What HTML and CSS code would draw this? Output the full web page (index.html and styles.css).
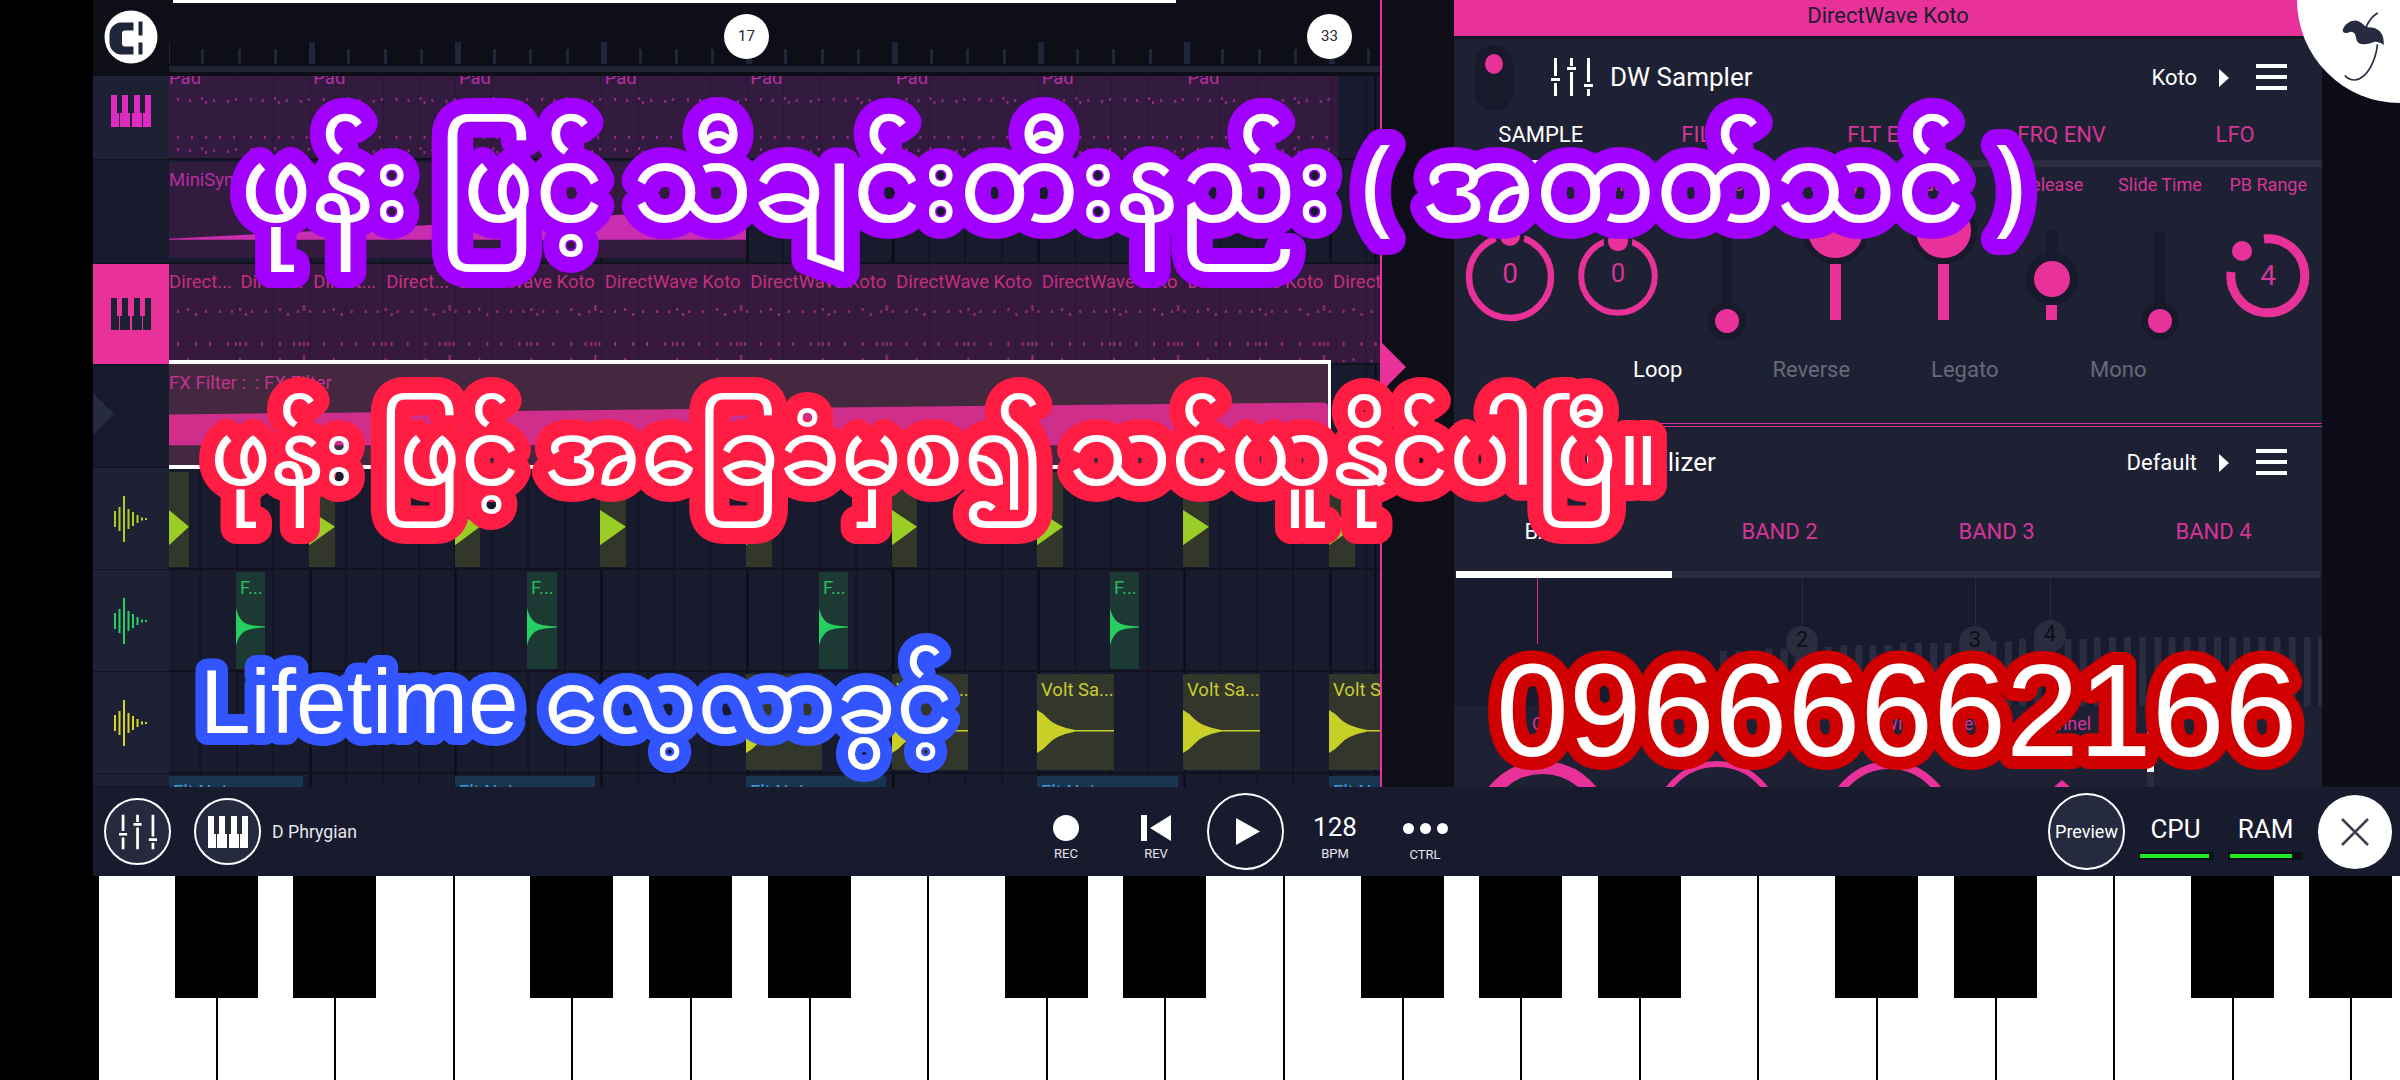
FILE: index.html
```html
<!DOCTYPE html>
<html lang="my">
<head>
<meta charset="UTF-8">
<title>FL Studio Mobile</title>
<link rel="stylesheet" href="styles.css">
</head>
<body>
<svg class="defs" width="0" height="0">
  <defs>
    <pattern id="notes-pad" width="72.85" height="50" patternUnits="userSpaceOnUse">
      <path class="note-mark note-mark--pad" d="M8 4h2v3H8zM20 5h2v3h-2zM32 3h2v3h-2zM36 7h2v3h-2zM44 5h2v3h-2zM58 6h2v3h-2zM66 4h2v3h-2zM8 42h2v3H8zM22 42h2v3h-2zM36 42h2v3h-2zM50 42h2v3h-2zM64 42h2v3h-2z"/>
    </pattern>
    <pattern id="notes-koto" width="145.7" height="50" patternUnits="userSpaceOnUse">
      <path class="note-mark note-mark--koto" d="M8 8h2v3H8zM18 6h2v3h-2zM26 11h2v3h-2zM36 8h2v3h-2zM50 8h2v3h-2zM62 8h2v3h-2zM70 6h2v3h-2zM76 11h2v3h-2zM82 8h2v3h-2zM96 8h2v3h-2zM110 6h2v3h-2zM118 11h2v3h-2zM128 8h2v3h-2zM134 3h2v6h-2zM140 8h2v3h-2zM8 40h2v4H8zM26 40h2v4h-2zM40 40h2v4h-2zM58 40h2v4h-2zM66 40h2v4h-2zM70 40h2v4h-2zM76 40h2v4h-2zM92 40h2v4h-2zM110 40h2v4h-2zM124 40h2v4h-2zM130 40h2v4h-2zM134 40h2v4h-2zM138 40h2v4h-2z"/>
    </pattern>
    <symbol id="piano" viewBox="0 0 40 32">
      <path fill-rule="evenodd" d="M0 0h40v32H0zM6 0v18h2v14h1V18h2V0zM17 0v18h2v14h2V18h2V0zM29 0v18h2v14h1V18h2V0z"/>
    </symbol>
    <symbol id="wave" viewBox="0 0 34 46">
      <path d="M1 15h2v16H1zM5.500 11h2v24h-2zM10 0h2v46h-2zM14.500 13h2v20h-2zM19 16h2v14h-2zM23.500 19h2v8h-2zM28 21.500h2v3h-2zM32 22h2v2h-2z"/>
    </symbol>
    <symbol id="mixer" viewBox="0 0 42 38">
      <path d="M3 0h3v18H3zM0 20h9v3H0zM3 25h3v13H3zM19 0h3v8h-3zM16 9h9v3h-9zM19 14h3v24h-3zM36 0h3v24h-3zM33 26h9v3h-9zM36 31h3v7h-3z"/>
    </symbol>
    <symbol id="decay-short" viewBox="0 0 30 40" preserveAspectRatio="none">
      <path d="M0 0Q2 10 8 15Q14 19 30 19.500V20.500Q14 21 8 25Q2 30 0 40z"/>
    </symbol>
    <symbol id="decay-long" viewBox="0 0 76 44" preserveAspectRatio="none">
      <path d="M0 0Q6 3 11 9Q18 17 38 20.500H76V22H38Q18 26 11 35Q6 41 0 44z"/>
    </symbol>
    <symbol id="hit-shape" viewBox="0 0 20 40" preserveAspectRatio="none">
      <path d="M0 0L20 18L0 38z"/>
    </symbol>
  </defs>
</svg>

<div class="app">
  <div class="workspace">
    <section class="timeline">
      <div class="corner">
        <svg class="logo" viewBox="0 0 54 54">
          <circle cx="27" cy="27" r="26.500" fill="#fff"/>
          <path fill="#20263a" d="M29.500 12.500H17A12 12 0 0 0 5.500 24.500V32.500A12 12 0 0 0 17 44.500H29.500V36.500H21A3 3 0 0 1 18 33.500V23.500A3 3 0 0 1 21 20.500H29.500z"/>
          <path fill="#20263a" d="M34.500 11.500h4v14h-4zM34.500 32.500h4v12h-4z"/>
        </svg>
      </div>
      <div class="ruler">
        <span class="bar-mark">17</span>
        <span class="bar-mark">33</span>
      </div>

      <div class="track-head track-head--one"><svg class="piano-icon piano-icon--pink"><use href="#piano"/></svg></div>
      <div class="lane lane--one">
        <div class="clip clip--pad" style="left:0;width:1169px">
          <svg class="notes notes--pad"><rect width="100%" height="100%" fill="url(#notes-pad)"/></svg>
          <span class="cell cell--first">Pad</span><span class="cell">Pad</span><span class="cell">Pad</span><span class="cell">Pad</span><span class="cell">Pad</span><span class="cell">Pad</span><span class="cell">Pad</span><span class="cell">Pad</span>
        </div>
      </div>

      <div class="track-head track-head--two"></div>
      <div class="lane lane--two">
        <div class="clip clip--synth" style="left:0;width:577px">
          <span class="clip-name">MiniSynth : MiniSynth</span>
          <svg class="envelope" viewBox="0 0 577 100" preserveAspectRatio="none"><path d="M0 80L577 48V81H0z"/></svg>
        </div>
      </div>

      <div class="track-head track-head--active"><svg class="piano-icon piano-icon--dark"><use href="#piano"/></svg></div>
      <div class="lane lane--three">
        <div class="clip clip--koto" style="left:0;width:1211px">
          <svg class="notes notes--koto"><rect width="100%" height="100%" fill="url(#notes-koto)"/></svg>
          <span class="cell cell--half-first">Direct...</span><span class="cell cell--half">Direct...</span><span class="cell cell--half">Direct...</span><span class="cell cell--half">Direct...</span><span class="cell">DirectWave Koto</span><span class="cell">DirectWave Koto</span><span class="cell">DirectWave Koto</span><span class="cell">DirectWave Koto</span><span class="cell">DirectWave Koto</span><span class="cell">DirectWave Koto</span><span class="cell">DirectWave Koto</span><span class="cell">Direct</span>
        </div>
      </div>

      <div class="track-head track-head--fx"><span class="fold-arrow"></span></div>
      <div class="lane lane--four">
        <div class="clip clip--fx" style="left:0;width:1162px">
          <svg class="envelope envelope--fx" viewBox="0 0 1156 100" preserveAspectRatio="none"><path d="M0 50L1150 38Q1156 38 1156 42V80.500H0z"/></svg>
          <span class="clip-name">FX Filter :&nbsp; : FX Filter</span>
        </div>
      </div>

      <div class="track-head"><svg class="wave-icon wave-icon--lime"><use href="#wave"/></svg></div>
      <div class="lane lane--lime">
        <div class="clip clip--lime" style="left:0;width:20px"><svg class="hit"><use href="#hit-shape"/></svg></div>
        <div class="clip clip--lime" style="left:140px;width:26px"><svg class="hit"><use href="#hit-shape"/></svg></div>
        <div class="clip clip--lime" style="left:286px;width:25px"><svg class="hit"><use href="#hit-shape"/></svg></div>
        <div class="clip clip--lime" style="left:431px;width:26px"><svg class="hit"><use href="#hit-shape"/></svg></div>
        <div class="clip clip--lime" style="left:577px;width:26px"><svg class="hit"><use href="#hit-shape"/></svg></div>
        <div class="clip clip--lime" style="left:723px;width:25px"><svg class="hit"><use href="#hit-shape"/></svg></div>
        <div class="clip clip--lime" style="left:868px;width:26px"><svg class="hit"><use href="#hit-shape"/></svg></div>
        <div class="clip clip--lime" style="left:1014px;width:26px"><svg class="hit"><use href="#hit-shape"/></svg></div>
        <div class="clip clip--lime" style="left:1160px;width:26px"><svg class="hit"><use href="#hit-shape"/></svg></div>
      </div>

      <div class="track-head"><svg class="wave-icon wave-icon--green"><use href="#wave"/></svg></div>
      <div class="lane lane--green">
        <div class="clip clip--green" style="left:67px;width:29px"><span class="clip-name">F...</span><svg class="decay"><use href="#decay-short"/></svg></div>
        <div class="clip clip--green" style="left:358px;width:30px"><span class="clip-name">F...</span><svg class="decay"><use href="#decay-short"/></svg></div>
        <div class="clip clip--green" style="left:650px;width:29px"><span class="clip-name">F...</span><svg class="decay"><use href="#decay-short"/></svg></div>
        <div class="clip clip--green" style="left:941px;width:29px"><span class="clip-name">F...</span><svg class="decay"><use href="#decay-short"/></svg></div>
      </div>

      <div class="track-head"><svg class="wave-icon wave-icon--yellow"><use href="#wave"/></svg></div>
      <div class="lane lane--yellow">
        <div class="clip clip--yellow" style="left:577px;width:76px"><span class="clip-name">Volt Sa...</span><svg class="decay decay--long"><use href="#decay-long"/></svg></div>
        <div class="clip clip--yellow" style="left:723px;width:76px"><span class="clip-name">Volt Sa...</span><svg class="decay decay--long"><use href="#decay-long"/></svg></div>
        <div class="clip clip--yellow" style="left:868px;width:77px"><span class="clip-name">Volt Sa...</span><svg class="decay decay--long"><use href="#decay-long"/></svg></div>
        <div class="clip clip--yellow" style="left:1014px;width:77px"><span class="clip-name">Volt Sa...</span><svg class="decay decay--long"><use href="#decay-long"/></svg></div>
        <div class="clip clip--yellow" style="left:1160px;width:77px"><span class="clip-name">Volt Sa...</span><svg class="decay decay--long"><use href="#decay-long"/></svg></div>
      </div>

      <div class="track-head"></div>
      <div class="lane lane--blue">
        <div class="clip clip--blue" style="left:0;width:134px"><span class="clip-name">Flt Noise</span></div>
        <div class="clip clip--blue" style="left:286px;width:140px"><span class="clip-name">Flt Noise</span></div>
        <div class="clip clip--blue" style="left:577px;width:140px"><span class="clip-name">Flt Noise</span></div>
        <div class="clip clip--blue" style="left:868px;width:141px"><span class="clip-name">Flt Noise</span></div>
        <div class="clip clip--blue" style="left:1160px;width:60px"><span class="clip-name">Flt Noise</span></div>
      </div>
    </section>

    <div class="gutter"><span class="playhead"></span></div>

    <section class="panel">
      <div class="plugin-title">DirectWave Koto</div>
      <div class="plugin">
        <header class="plugin-head">
          <span class="power"><span class="power-dot"></span></span>
          <svg class="mixer-icon"><use href="#mixer"/></svg>
          <span class="plugin-name">DW Sampler</span>
          <span class="preset">Koto</span>
          <span class="arrow"></span>
          <span class="burger"><i></i><i></i><i></i></span>
        </header>
        <nav class="tabs tabs--five">
          <span class="tab tab--on">SAMPLE</span>
          <span class="tab">FILTER</span>
          <span class="tab">FLT ENV</span>
          <span class="tab">FRQ ENV</span>
          <span class="tab">LFO</span>
        </nav>
        <div class="rail"><span class="rail-on rail-on--five"></span></div>
        <div class="params">
          <div class="param"><span class="param-name">Start</span>
            <svg class="knob" viewBox="0 0 100 100"><circle class="knob-ring" cx="50" cy="50" r="41"/><circle class="knob-dot" cx="50" cy="9" r="10"/><text x="50" y="56">0</text></svg></div>
          <div class="param"><span class="param-name">End</span>
            <svg class="knob knob--small" viewBox="0 0 100 100"><circle class="knob-ring" cx="50" cy="50" r="40"/><circle class="knob-dot" cx="50" cy="12" r="11"/><text x="50" y="57">0</text></svg></div>
          <div class="param"><span class="param-name">Attack</span><span class="fader"><span class="fader-thumb fader-thumb--low"></span></span></div>
          <div class="param"><span class="param-name">Decay</span><span class="fader"><span class="fader-fill" style="height:56px"></span><span class="fader-thumb fader-thumb--big" style="bottom:56px"></span></span></div>
          <div class="param"><span class="param-name">Sustain</span><span class="fader"><span class="fader-fill" style="height:56px"></span><span class="fader-thumb fader-thumb--big" style="bottom:56px"></span></span></div>
          <div class="param"><span class="param-name">Release</span><span class="fader"><span class="fader-fill" style="height:15px"></span><span class="fader-thumb" style="bottom:15px"></span></span></div>
          <div class="param"><span class="param-name">Slide Time</span><span class="fader"><span class="fader-thumb fader-thumb--low"></span></span></div>
          <div class="param"><span class="param-name">PB Range</span>
            <svg class="knob knob--range" viewBox="0 0 100 100"><path class="range-arc" d="M46 13A37 37 0 1 1 13 46"/><circle class="knob-dot knob-dot--range" cx="24" cy="25" r="10"/><text x="50" y="59">4</text></svg></div>
        </div>
        <div class="toggles">
          <span class="toggle toggle--on">Loop</span>
          <span class="toggle">Reverse</span>
          <span class="toggle">Legato</span>
          <span class="toggle">Mono</span>
        </div>
      </div>

      <div class="divider"></div>

      <div class="plugin plugin--eq">
        <header class="plugin-head plugin-head--eq">
          <svg class="mixer-icon"><use href="#mixer"/></svg>
          <span class="plugin-name">Equalizer</span>
          <span class="preset">Default</span>
          <span class="arrow"></span>
          <span class="burger"><i></i><i></i><i></i></span>
        </header>
        <nav class="tabs tabs--four">
          <span class="tab tab--on">BAND 1</span>
          <span class="tab">BAND 2</span>
          <span class="tab">BAND 3</span>
          <span class="tab">BAND 4</span>
        </nav>
        <div class="rail rail--eq"><span class="rail-on rail-on--four"></span></div>
        <div class="eq-graph">
          <div class="spectrum">
            <svg class="spectrum-bars" viewBox="0 0 600 70" preserveAspectRatio="none"><path d="M0 14h7v56H0zM15 14h7v56h-7zM30 14h7v56h-7zM45 12h7v58h-7zM60 12h7v58h-7zM74 10h7v60h-7zM89 10h7v60h-7zM104 10h7v60h-7zM119 8h7v62h-7zM134 8h7v62h-7zM148 8h7v62h-7zM163 8h7v62h-7zM178 6h7v64h-7zM193 6h7v64h-7zM208 6h7v64h-7zM222 6h7v64h-7zM237 4h7v66h-7zM252 4h7v66h-7zM267 4h7v66h-7zM282 4h7v66h-7zM296 2h7v68h-7zM311 2h7v68h-7zM326 2h7v68h-7zM341 2h7v68h-7zM356 2h7v68h-7zM370 0h7v70h-7zM385 0h7v70h-7zM400 0h7v70h-7zM415 0h7v70h-7zM430 0h7v70h-7zM444 0h7v70h-7zM459 0h7v70h-7zM474 0h7v70h-7zM489 0h7v70h-7zM504 0h7v70h-7zM518 0h7v70h-7zM533 0h7v70h-7zM548 0h7v70h-7zM563 0h7v70h-7zM578 0h7v70h-7zM592 0h7v70h-7z"/></svg>
          </div>
          <span class="band band--one"></span>
          <span class="band band--two"><b>2</b></span>
          <span class="band band--three"><b>3</b></span>
          <span class="band band--four"><b>4</b></span>
        </div>
        <div class="eq-controls">
          <span class="eq-name eq-name--q">Q</span>
          <span class="eq-name eq-name--freq">Freq</span>
          <span class="eq-name eq-name--width">Width</span>
          <span class="eq-name eq-name--gain">Level</span>
          <span class="eq-name eq-name--chan">Channel</span>
          <span class="eq-arc eq-arc--one"></span>
          <span class="eq-arc eq-arc--two"></span>
          <span class="eq-arc eq-arc--three"></span>
          <span class="eq-mark"></span>
          <span class="eq-level"></span>
        </div>
      </div>
    </section>

    <aside class="side">
      <span class="fruit-badge">
        <svg class="fruit" viewBox="0 0 240 300">
          <path class="fruit-body" d="M68 90C75 70 95 60 110 62C125 64 130 78 145 82C165 82 185 90 190 115L192 135C185 130 175 125 165 125C150 130 125 140 112 125C105 110 110 100 95 95C85 95 80 103 70 97z"/>
          <path class="fruit-stem" d="M172 40C155 50 145 65 138 82M172 135C168 175 145 235 105 240C95 240 82 235 76 228"/>
        </svg>
      </span>
    </aside>
  </div>

  <footer class="transport">
    <div class="transport-left">
      <span class="round-btn"><svg class="mixer-icon mixer-icon--small"><use href="#mixer"/></svg></span>
      <span class="round-btn"><svg class="piano-icon piano-icon--white"><use href="#piano"/></svg></span>
      <span class="scale-name">D Phrygian</span>
    </div>
    <div class="transport-mid">
      <div class="ctl ctl--rec"><span class="rec-dot"></span><span class="ctl-label">REC</span></div>
      <div class="ctl ctl--rev"><svg class="rev-icon" viewBox="0 0 30 26"><path d="M0 0h6v26H0zM30 0v26L9 13z"/></svg><span class="ctl-label">REV</span></div>
      <span class="play"><svg class="play-icon" viewBox="0 0 24 28"><path d="M0 0L24 13.500L0 27z"/></svg></span>
      <div class="ctl ctl--bpm"><span class="bpm">128</span><span class="ctl-label">BPM</span></div>
      <div class="ctl ctl--ctrl"><span class="dots"><i></i><i></i><i></i></span><span class="ctl-label">CTRL</span></div>
    </div>
    <div class="transport-right">
      <span class="preview">Preview</span>
      <div class="meter"><span class="meter-name">CPU</span><span class="meter-bar"><i class="meter-fill meter-fill--cpu"></i></span></div>
      <div class="meter"><span class="meter-name">RAM</span><span class="meter-bar"><i class="meter-fill meter-fill--ram"></i></span></div>
      <span class="close"><svg class="close-icon" viewBox="0 0 28 28"><path d="M1 1L27 27M27 1L1 27"/></svg></span>
    </div>
  </footer>

  <div class="keyboard">
    <span class="key"></span><span class="key key--sharp"></span><span class="key key--sharp"></span><span class="key"></span><span class="key key--sharp"></span><span class="key key--sharp"></span><span class="key key--sharp"></span><span class="key"></span><span class="key key--sharp"></span><span class="key key--sharp"></span><span class="key"></span><span class="key key--sharp"></span><span class="key key--sharp"></span><span class="key key--sharp"></span><span class="key"></span><span class="key key--sharp"></span><span class="key key--sharp"></span><span class="key"></span><span class="key key--sharp"></span><span class="key key--sharp"></span>
  </div>
</div>

<svg class="promos" viewBox="0 0 2400 1080">
  <text class="promo promo--burmese promo--title" x="240" y="222">ဖုန်း ဖြင့် သီချင်းတီးနည်း ( အတတ်သင် )</text>
  <text class="promo promo--burmese promo--sub" x="210" y="485">ဖုန်း ဖြင့် အခြေခံမှစ၍ သင်ယူနိုင်ပါပြီ။</text>
  <text class="promo promo--life" x="200" y="733">Lifetime <tspan class="promo-burmese">လေ့လာခွင့်</tspan></text>
  <text class="promo promo--phone" x="1496" y="756">09666662166</text>
</svg>
</body>
</html>
```

FILE: styles.css
```css
* {
	box-sizing: border-box;
}

html, body {
	margin: 0;
	height: 100%;
	overflow: hidden;
	background: #000;
}

body {
	position: relative;
	font-family: Roboto, "Liberation Sans", sans-serif;
	color: #fff;
}

.defs {
	position: absolute;
}

.app {
	display: flex;
	flex-direction: column;
	height: 1080px;
	padding-left: 93px;
}

.workspace {
	display: flex;
	height: 787px;
	background: #0d0e18;
}

/* timeline */

.timeline {
	display: grid;
	grid-template-columns: 76px 1211px;
	grid-template-rows: 76px 84px 104px 101px 103px 102px 102px 102px 13px;
	width: 1287px;
	background: #0d0e18;
}

.corner {
	display: flex;
	align-items: center;
	padding: 0 0 3px 11px;
	background: #0d0e18;
}

.logo {
	width: 54px;
	height: 54px;
}

.ruler {
	position: relative;
	border-bottom: 6px solid #1f2433;
	margin-bottom: 4px;
	background-color: #0d0e18;
	background-image:
		linear-gradient(#fff, #fff),
		repeating-linear-gradient(90deg, #20263a 0 6px, transparent 6px 145.7px),
		repeating-linear-gradient(90deg, #20263a 0 3px, transparent 3px 36.43px);
	background-size: 1003px 3px, 100% 22px, 100% 15px;
	background-position: 4px 0, -5.400px 42px, -4px 49px;
	background-repeat: no-repeat;
}

.bar-mark {
	position: absolute;
	top: 14px;
	width: 45px;
	height: 45px;
	border-radius: 50%;
	background: #fff;
	color: #20263a;
	font-size: 15px;
	line-height: 45px;
	text-align: center;
}

.bar-mark:nth-child(1) {
	left: 555px;
}

.bar-mark:nth-child(2) {
	left: 1138px;
}

.track-head {
	display: flex;
	align-items: center;
	justify-content: center;
	background: #1e2133;
	border-bottom: 1px solid #10111c;
}

.track-head--one {
	align-items: flex-start;
	padding-top: 19px;
}

.track-head--two,
.track-head--fx {
	background: #171a2c;
}

.track-head--active {
	background: #e8329a;
}

.track-head--fx {
	justify-content: flex-start;
}

.fold-arrow {
	width: 0;
	height: 0;
	margin-top: -5px;
	border-left: 21px solid #262b3e;
	border-top: 21px solid transparent;
	border-bottom: 21px solid transparent;
}

.piano-icon {
	width: 40px;
	height: 32px;
}

.piano-icon--pink {
	fill: #df2cc0;
}

.piano-icon--dark {
	fill: #1e2133;
}

.piano-icon--white {
	fill: #fff;
}

.wave-icon {
	width: 34px;
	height: 46px;
	margin-right: 3px;
}

.wave-icon--lime {
	fill: #a9cf26;
}

.wave-icon--green {
	fill: #27cf62;
}

.wave-icon--yellow {
	fill: #d4d42a;
}

.lane {
	position: relative;
	overflow: hidden;
	background-color: #181a2e;
	background-image:
		repeating-linear-gradient(90deg, #0b0c16 0 2px, transparent 2px 145.7px),
		repeating-linear-gradient(90deg, #0e101b 0 1px, transparent 1px 36.43px);
	background-position: -5.400px 0, -5.400px 0;
	border-bottom: 2px solid #10111c;
}

.clip {
	position: absolute;
	top: 2px;
	bottom: 2px;
	overflow: hidden;
	font-size: 18.500px;
	white-space: nowrap;
}

.clip-name {
	display: block;
	padding-left: 4px;
}

.cell {
	flex: none;
	position: relative;
	width: 145.700px;
	padding-left: 4px;
	overflow: hidden;
}

.cell--first {
	width: 140.300px;
	padding-left: 0;
}

.cell--half {
	width: 72.850px;
}

.cell--half-first {
	width: 67.450px;
	padding-left: 0;
}

.notes {
	position: absolute;
	left: 0;
	width: 100%;
}

.note-mark--pad {
	fill: #8e2a8a;
}

.note-mark--koto {
	fill: #96306c;
}

.clip--pad,
.clip--koto {
	display: flex;
	align-items: flex-start;
	top: 0;
	bottom: 0;
	background-image: repeating-linear-gradient(90deg, #2b1535 0 1px, transparent 1px 36.43px);
	background-position: -5.400px 0;
}

.clip--pad {
	width: 1169px;
	background-color: #331a3f;
	color: #b32fa0;
}

.clip--pad .cell {
	margin-top: -9px;
}

.notes--pad {
	top: 18px;
	height: 60px;
}

.clip--synth {
	top: 2px;
	bottom: 4px;
	background: #331a3f;
	color: #b32fa0;
}

.clip--synth .clip-name {
	padding: 7px 0 0;
}

.envelope {
	position: absolute;
	left: 0;
	top: 0;
	width: 100%;
	height: 100%;
	fill: #c92db0;
}

.clip--koto {
	background-color: #35193f;
	color: #c2307e;
}

.clip--koto .cell {
	padding-top: 7px;
}

.notes--koto {
	top: 38px;
	height: 60px;
}

.lane--four {
	overflow: visible;
	z-index: 1;
}

.clip--fx {
	top: -5px;
	bottom: -3px;
	border: 4px solid #fff;
	border-left: 0;
	border-right-width: 3px;
	background: #44283f;
	color: #c0338e;
}

.clip--fx .clip-name {
	position: relative;
	padding: 8px 0 0;
}

.envelope--fx {
	fill: #cf2f8a;
}

.clip--lime {
	top: 4px;
	bottom: 1px;
	background: #32372a;
}

.hit {
	position: absolute;
	left: 0;
	top: 38px;
	width: 100%;
	height: 37px;
	fill: #9ace26;
}

.clip--green {
	top: 2px;
	bottom: 1px;
	background: #1c3a33;
	color: #28b860;
}

.clip--green .clip-name {
	padding-top: 5px;
}

.decay {
	position: absolute;
	left: 0;
	top: 36px;
	width: 100%;
	height: 38px;
	fill: #27cf62;
}

.clip--yellow {
	background: #33362a;
	color: #c8cc30;
}

.clip--yellow .clip-name {
	padding-top: 5px;
}

.decay--long {
	top: 36px;
	height: 43px;
	fill: #c8d028;
}

.clip--blue {
	background: #1a3550;
	color: #3f9ad6;
	bottom: 0;
}

.clip--blue .clip-name {
	padding-top: 5px;
}

.lane--blue {
	border-bottom: 0;
}

/* gutter with the pink line */

.gutter {
	position: relative;
	width: 74px;
	border-left: 2px solid #e8329a;
	background: #0d0e18;
}

.playhead {
	position: absolute;
	left: 0;
	top: 343px;
	width: 0;
	height: 0;
	border-left: 24px solid #e8329a;
	border-top: 24px solid transparent;
	border-bottom: 24px solid transparent;
}

/* plugin panel */

.panel {
	display: flex;
	flex-direction: column;
	width: 868px;
	background: #1e2133;
}

.plugin-title {
	height: 39px;
	background: #e8329a;
	color: #1c1e30;
	font-size: 22px;
	line-height: 32px;
	text-align: center;
	border-bottom: 3px solid #16182a;
}

.plugin {
	display: flex;
	flex-direction: column;
}

.plugin-head {
	position: relative;
	display: flex;
	align-items: center;
	height: 76px;
	padding: 0 35px 0 97px;
}

.plugin-head--eq {
	height: 70px;
}

.power {
	position: absolute;
	left: 21px;
	top: 6px;
	width: 38px;
	height: 66px;
	border-radius: 19px;
	background: #181a2c;
}

.power-dot {
	display: block;
	width: 18px;
	height: 20px;
	margin: 9px auto 0;
	border-radius: 50%;
	background: #e8329a;
}

.mixer-icon {
	width: 42px;
	height: 38px;
	fill: #fff;
	flex: none;
}

.plugin-name {
	margin-left: 17px;
	font-size: 26px;
}

.preset {
	margin-left: auto;
	font-size: 22px;
}

.arrow {
	width: 0;
	height: 0;
	margin: 2px 27px 0 22px;
	border-left: 10px solid #fff;
	border-top: 9px solid transparent;
	border-bottom: 9px solid transparent;
}

.burger {
	display: flex;
	flex-direction: column;
	justify-content: space-between;
	width: 31px;
	height: 26px;
}

.burger i {
	height: 4px;
	background: #fff;
}

.tabs {
	display: grid;
	height: 45px;
	font-size: 22px;
	text-align: center;
	color: #d43597;
}

.tabs--five {
	grid-template-columns: repeat(5, 1fr);
}

.tabs--five .tab {
	padding-top: 7px;
}

.tabs--four {
	grid-template-columns: repeat(4, 1fr);
	height: 74px;
}

.tabs--four .tab {
	padding-top: 22px;
}

.tab--on {
	color: #fff;
}

.rail {
	height: 7px;
	background: #2a2d40;
}

.rail--eq {
	margin: 0 2px;
}

.rail-on {
	display: block;
	height: 100%;
	background: #fff;
}

.rail-on--five {
	width: 20%;
}

.rail-on--four {
	width: 25%;
}

.params {
	display: grid;
	grid-template-columns: repeat(8, 108.300px);
	padding-left: 2px;
	height: 190px;
}

.param {
	display: flex;
	flex-direction: column;
	align-items: center;
}

.param-name {
	margin-top: 7px;
	height: 23px;
	color: #d43597;
	font-size: 18px;
	white-space: nowrap;
}

.knob {
	width: 100px;
	height: 100px;
	margin-top: 30px;
}

.knob--small {
	width: 92px;
	height: 92px;
	margin-top: 33px;
}

.knob-ring {
	fill: none;
	stroke: #e8329a;
	stroke-width: 6.500;
}

.knob-dot {
	fill: #e8329a;
	stroke: #1e2133;
	stroke-width: 9;
	paint-order: stroke;
}

.knob-dot--range {
	stroke-width: 6;
}

.knob text {
	fill: #d43597;
	font-size: 28px;
	text-anchor: middle;
}

.knob--range {
	margin-top: 29px;
}

.range-arc {
	fill: none;
	stroke: #e8329a;
	stroke-width: 9;
}

.fader {
	position: relative;
	width: 11px;
	height: 89px;
	margin-top: 34px;
	background: #181a2c;
}

.fader-fill {
	position: absolute;
	left: 0;
	bottom: 0;
	width: 100%;
	background: #e8329a;
}

.fader-thumb {
	position: absolute;
	left: 50%;
	width: 52px;
	height: 52px;
	margin-left: -26px;
	border: 8px solid #181a2c;
	border-radius: 50%;
	background: #e8329a;
}

.fader-thumb--low {
	bottom: -20px;
	width: 38px;
	height: 38px;
	margin-left: -19px;
	border-width: 7px;
}

.fader-thumb--big {
	width: 67px;
	height: 67px;
	margin-left: -33px;
	border-width: 6px;
}

.toggles {
	display: grid;
	grid-template-columns: repeat(4, 153.500px);
	padding-left: 127px;
	height: 46px;
	color: #666a7a;
	font-size: 22px;
	text-align: center;
}

.toggle--on {
	color: #fff;
}

.divider {
	height: 4px;
	margin-top: 20px;
	border-top: 1px solid #d43597;
	border-bottom: 1px solid #d43597;
}

/* equalizer */

.eq-graph {
	position: relative;
	height: 128px;
	background: #181a2e;
}

.spectrum {
	position: absolute;
	left: 266px;
	right: -4px;
	bottom: 0;
	height: 69px;
}

.spectrum-bars {
	display: block;
	width: 100%;
	height: 100%;
	fill: #2a2d40;
}

.band {
	position: absolute;
	top: 0;
	width: 1px;
	background: #272a3c;
}

.band--one {
	left: 83px;
	height: 66px;
	background: #c8329a;
}

.band--two {
	left: 348px;
	height: 48px;
}

.band--three {
	left: 521px;
	height: 48px;
}

.band--four {
	left: 596px;
	height: 42px;
}

.band b {
	position: absolute;
	left: -16px;
	top: 100%;
	width: 32px;
	height: 32px;
	border-radius: 50%;
	background: #2a2d40;
	color: #0d0e18;
	font-size: 22px;
	font-weight: 400;
	line-height: 28px;
	text-align: center;
}

.eq-controls {
	position: relative;
	height: 81px;
	overflow: hidden;
}

.eq-name {
	position: absolute;
	top: 7px;
	color: #d43597;
	font-size: 18px;
}

.eq-name--q { left: 78px; }
.eq-name--freq { left: 234px; }
.eq-name--width { left: 428px; }
.eq-name--gain { left: 500px; }
.eq-name--chan { left: 572px; }

.eq-arc {
	position: absolute;
	top: 55px;
	border: 13px solid #e8329a;
	border-radius: 50%;
}

.eq-arc--one {
	left: 20px;
	width: 137px;
	height: 137px;
}

.eq-arc--two {
	left: 200px;
	width: 126px;
	height: 126px;
	border-width: 6px;
}

.eq-arc--three {
	left: 372px;
	width: 127px;
	height: 127px;
	border-width: 8px;
}

.eq-mark {
	position: absolute;
	left: 600px;
	bottom: 0;
	width: 0;
	height: 0;
	border: 8px solid transparent;
	border-bottom: 7px solid #e8329a;
	border-top: 0;
}

.eq-level {
	position: absolute;
	left: 693px;
	top: 0;
	width: 7px;
	height: 81px;
	background: linear-gradient(#fff 0 66px, #2a2d40 66px);
}

/* right edge */

.side {
	position: relative;
	flex: 1;
	background: #0c0d18;
}

.fruit-badge {
	position: absolute;
	right: 0;
	top: 0;
	width: 103px;
	height: 103px;
	border-bottom-left-radius: 103px;
	background: #fff;
}

.fruit {
	position: absolute;
	left: 23px;
	top: 0;
	width: 80px;
	height: 100px;
}

.fruit-body {
	fill: #262b40;
}

.fruit-stem {
	fill: none;
	stroke: #262b40;
	stroke-width: 5;
	stroke-linecap: round;
}

/* transport */

.transport {
	display: grid;
	grid-template-columns: 1fr auto 1fr;
	align-items: center;
	height: 89px;
	background: #181a2e;
}

.transport-left {
	display: flex;
	align-items: center;
	gap: 23px;
	padding-left: 11px;
}

.round-btn {
	display: flex;
	align-items: center;
	justify-content: center;
	width: 67px;
	height: 67px;
	border: 2px solid #fff;
	border-radius: 50%;
	background: #262a3e;
}

.mixer-icon--small {
	width: 38px;
	height: 38px;
}

.scale-name {
	margin-left: -12px;
	font-size: 17.700px;
	color: #e6e6ec;
}

.transport-mid {
	display: flex;
	align-items: center;
	margin-left: -2px;
}

.ctl {
	display: flex;
	flex-direction: column;
	align-items: center;
	width: 90px;
}

.ctl-label {
	font-size: 13px;
	color: #e6e6ec;
}

.rec-dot {
	width: 26px;
	height: 26px;
	margin: 13px 0 5px;
	border-radius: 50%;
	background: #fff;
}

.rev-icon {
	width: 30px;
	height: 26px;
	margin: 13px 0 5px;
	fill: #fff;
}

.play {
	display: flex;
	align-items: center;
	justify-content: center;
	width: 77px;
	height: 77px;
	margin: 0 6px;
	border: 2px solid #fff;
	border-radius: 50%;
}

.play-icon {
	width: 24px;
	height: 28px;
	margin-left: 4px;
	fill: #fff;
}

.bpm {
	font-size: 26px;
	line-height: 33px;
	margin-top: 9px;
	margin-bottom: 2px;
}

.dots {
	display: flex;
	gap: 6px;
	margin: 21px 0 13px;
}

.dots i {
	width: 11px;
	height: 11px;
	border-radius: 50%;
	background: #fff;
}

.transport-right {
	display: flex;
	align-items: center;
	justify-content: flex-end;
	padding-right: 8px;
}

.preview {
	display: flex;
	align-items: center;
	justify-content: center;
	width: 77px;
	height: 77px;
	margin-right: 13px;
	border: 2px solid #fff;
	border-radius: 50%;
	background: #262a3e;
	font-size: 18px;
}

.meter {
	display: flex;
	flex-direction: column;
	align-items: center;
	width: 75px;
	margin: 10px 15px 0 0;
}

.meter-name {
	font-size: 26px;
	line-height: 32px;
}

.meter-bar {
	display: block;
	width: 75px;
	height: 8px;
	margin-top: 7px;
	padding: 2px;
	background: #0d0e18;
}

.meter-fill {
	display: block;
	height: 100%;
	background: #1de81d;
}

.meter-fill--cpu {
	width: 69px;
}

.meter-fill--ram {
	width: 62px;
}

.close {
	display: flex;
	align-items: center;
	justify-content: center;
	width: 74px;
	height: 74px;
	border-radius: 50%;
	background: #fff;
}

.close-icon {
	width: 28px;
	height: 28px;
	fill: none;
	stroke: #3c4050;
	stroke-width: 2.500;
}

/* keyboard */

.keyboard {
	display: flex;
	height: 204px;
	padding-left: 4px;
	background: #000;
}

.key {
	position: relative;
	flex: 0 0 118.600px;
	background: #fff;
	border-left: 2px solid #000;
}

.key--sharp::before {
	content: "";
	position: absolute;
	left: -43px;
	top: 0;
	width: 83px;
	height: 122px;
	background: #000;
}

/* overlay captions */

.promos {
	position: absolute;
	left: 0;
	top: 0;
	z-index: 5;
	width: 2400px;
	height: 1080px;
}

.promo {
	font-family: "Liberation Sans", sans-serif;
	fill: #fff;
	paint-order: stroke fill;
	stroke-linejoin: round;
	stroke-linecap: round;
}

.promo--burmese,
.promo-burmese {
	font-family: "Noto Sans Myanmar", Padauk, "Myanmar Text", "Noto Sans", "Liberation Sans", sans-serif;
}

.promo--title {
	font-size: 107px;
	stroke: #a100ff;
	stroke-width: 32px;
}

.promo--sub {
	font-size: 91px;
	stroke: #ff1d44;
	stroke-width: 32px;
}

.promo--life {
	font-size: 91px;
	stroke: #3355ff;
	stroke-width: 24px;
}

.promo-burmese {
	font-size: 88px;
}

.promo--phone {
	font-size: 131px;
	stroke: #d00000;
	stroke-width: 26px;
}
```
